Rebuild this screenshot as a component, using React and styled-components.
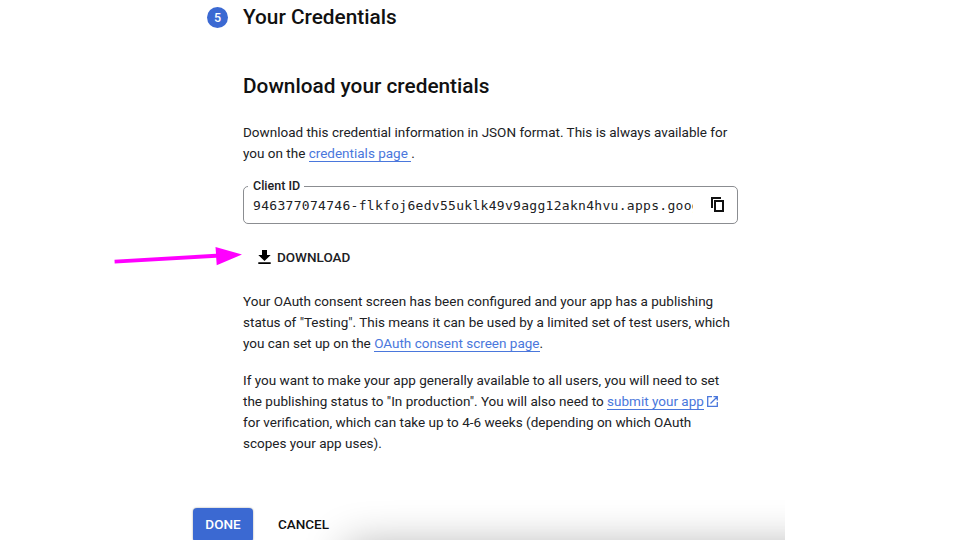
import React from "react";
import styled, { createGlobalStyle } from "styled-components";

const Global = createGlobalStyle`
  * { box-sizing: border-box; }
  body { margin: 0; background: #fff; font-family: Roboto, sans-serif; color: #202124; overflow: hidden; }
`;
const Page = styled.main`
  position: relative;
  width: 960px;
  height: 540px;
  overflow: hidden;
  padding-left: 193px;
`;
const StepHeader = styled.header`
  display: flex;
  align-items: center;
  height: 35px;
  padding-left: 14px;
`;
const StepNumber = styled.span`
  display: grid;
  place-items: center;
  width: 21px;
  height: 21px;
  margin-right: 15px;
  border-radius: 50%;
  background: #3b69d2;
  color: #fff;
  font-size: 12.5px;
  font-weight: 500;
`;
const Title = styled.h1`
  margin: 0;
  padding-bottom: ${(p) => (p.$step ? "2px" : "0")};
  font-size: 20.8px;
  line-height: 28px;
  font-weight: 500;
  color: #111;
`;
const Content = styled.section`
  width: 495px;
  margin-left: 50px;
  padding-top: 37px;
`;
const Paragraph = styled.p`
  margin: ${(p) => p.$top} 0 0;
  font-size: 13.5px;
  line-height: 21px;
  white-space: nowrap;
`;
const Line = styled.span`
  display: block;
`;
const Link = styled.a`
  color: #4a77dc;
  border-bottom: 1px solid #4a77dc;
  white-space: pre;
`;
const Field = styled.fieldset`
  display: flex;
  align-items: center;
  width: 495px;
  height: 45px;
  margin: 15px 0 0;
  padding: 0 12px 5px 9px;
  border: 1px solid #8b8d91;
  border-radius: 5px;
`;
const Legend = styled.legend`
  padding: 0 4px 0 5px;
  margin-left: -5px;
  font-size: 12.5px;
  line-height: 14px;
  font-weight: 500;
`;
const Value = styled.span`
  width: 440px;
  overflow: hidden;
  white-space: nowrap;
  font: 13px/20px "DejaVu Sans Mono", monospace;
  letter-spacing: 0.3px;
`;
const CopyIcon = styled.svg`
  width: 16px;
  height: 17px;
  margin: -3px -1px 0 auto;
`;
const DownloadButton = styled.button`
  display: flex;
  align-items: center;
  gap: 5px;
  height: 24px;
  margin: 21px 0 0 14px;
  padding: 0;
  border: 0;
  background: none;
  color: #202124;
  font: 500 13.5px/20px Roboto, sans-serif;
`;
const DownloadIcon = styled.svg`
  width: 15px;
  height: 16px;
`;
const ExternalIcon = styled.svg`
  width: 13px;
  height: 13px;
  margin-left: 2px;
  vertical-align: -2px;
`;
const Actions = styled.footer`
  display: flex;
  margin-top: 54px;
`;
const Action = styled.button`
  height: 34px;
  padding: 0 0 2px;
  border: 0;
  border-radius: 4px;
  position: relative;
  z-index: 1;
  width: ${(p) => (p.$primary ? "60px" : "101px")};
  background: ${(p) => (p.$primary ? "#3b69d2" : "transparent")};
  box-shadow: ${(p) => (p.$primary ? "0 0 2px #0006" : "none")};
  color: ${(p) => (p.$primary ? "#fff" : "#111")};
  font: 500 13.5px/32px Roboto, sans-serif;
`;
const BottomShade = styled.div`
  position: absolute;
  left: 300px;
  top: 490px;
  width: 485px;
  height: 50px;
  overflow: hidden;
  &::after {
    content: "";
    position: absolute;
    left: 50px;
    top: 60px;
    width: 600px;
    height: 80px;
    box-shadow: 0 0 44px 4px #00000052;
  }
`;
const Arrow = styled.svg`
  position: absolute;
  left: 110px;
  top: 243px;
  width: 136px;
  height: 24px;
`;

export default function App() {
  return (
    <>
      <Global />
      <Page>
        <StepHeader>
          <StepNumber>5</StepNumber>
          <Title $step>Your Credentials</Title>
        </StepHeader>
        <Content>
          <Title as="h2">Download your credentials</Title>
          <Paragraph $top="22px">
            <Line>Download this credential information in JSON format. This is always available for</Line>
            <Line>you on the <Link>{"credentials page "}</Link>.</Line>
          </Paragraph>
          <Field>
            <Legend>Client ID</Legend>
            <Value>946377074746-flkfoj6edv55uklk49v9agg12akn4hvu.apps.goog</Value>
            <CopyIcon viewBox="0 0 16 17" fill="none" stroke="#111" strokeWidth="2">
              <path d="M2 12V2H11" />
              <path d="M5 5H13V15H5Z" />
            </CopyIcon>
          </Field>
          <DownloadButton>
            <DownloadIcon viewBox="0 0 15 16" fill="#000">
              <path d="M5 1H10V6H13.7L7.5 12L1.3 6H5ZM1.3 13.2H13.7V15H1.3Z" />
            </DownloadIcon>
            DOWNLOAD
          </DownloadButton>
          <Paragraph $top="22px">
            <Line>Your OAuth consent screen has been configured and your app has a publishing</Line>
            <Line>status of "Testing". This means it can be used by a limited set of test users, which</Line>
            <Line>you can set up on the <Link>OAuth consent screen page</Link>.</Line>
          </Paragraph>
          <Paragraph $top="16px">
            <Line>If you want to make your app generally available to all users, you will need to set</Line>
            <Line>
              the publishing status to "In production". You will also need to <Link>submit your app</Link>
              <ExternalIcon viewBox="0 0 13 13" fill="none" stroke="#4a77dc" strokeWidth="1.3">
                <path d="M6 1.7H1.7V11.3H11.3V7M7.5 1.7H11.3V5.5M11.3 1.7L4.5 8.5" />
              </ExternalIcon>
            </Line>
            <Line>for verification, which can take up to 4-6 weeks (depending on which OAuth</Line>
            <Line>scopes your app uses).</Line>
          </Paragraph>
        </Content>
        <Actions>
          <Action $primary>DONE</Action>
          <Action>CANCEL</Action>
        </Actions>
        <BottomShade />
        <Arrow viewBox="0 0 136 24" fill="#f0f">
          <path d="M4.5 16.7L106 10.8L105.5 4L132 11.4L106.7 22.3L106.2 14.8L4.7 20.5Z" />
        </Arrow>
      </Page>
    </>
  );
}
